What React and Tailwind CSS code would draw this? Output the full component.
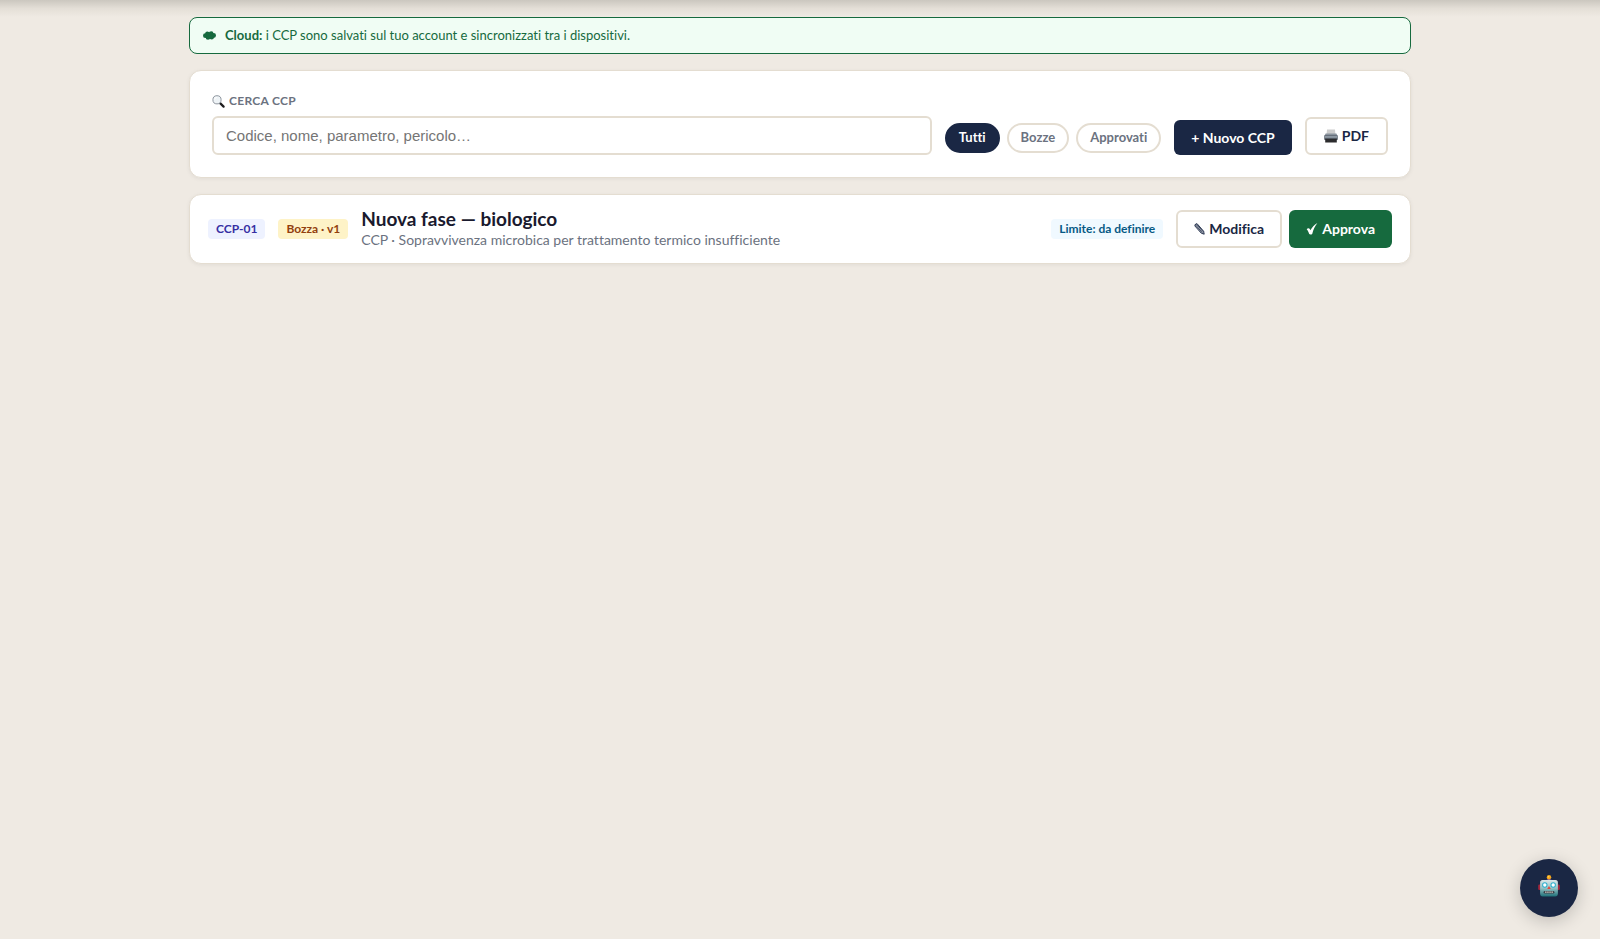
import { useState } from 'react';

const filters = ['Tutti', 'Bozze', 'Approvati'];

const ccpList = [
    {
        code: 'CCP-01',
        status: 'Bozza · v1',
        title: 'Nuova fase — biologico',
        description: 'CCP · Sopravvivenza microbica per trattamento termico insufficiente',
        limit: 'Limite: da definire',
    },
];

function CloudIcon() {
    return (
        <svg className="w-[13px] h-[9px] shrink-0" viewBox="0 0 12 8" fill="currentColor" aria-hidden="true">
            <circle cx="2.2" cy="4.2" r="2.2" />
            <circle cx="4" cy="2.3" r="2" />
            <circle cx="7.6" cy="2.2" r="2.1" />
            <circle cx="9.8" cy="4" r="2.2" />
            <circle cx="8" cy="5.7" r="2.1" />
            <circle cx="4.6" cy="5.8" r="2.1" />
            <rect x="3" y="1" width="6" height="6" />
        </svg>
    );
}

function SearchIcon() {
    return (
        <svg className="w-[13px] h-[13px] shrink-0" viewBox="0 0 13 13" fill="none" aria-hidden="true">
            <path d="M7.6 7.6 11.6 11.6" stroke="#1c1c1e" strokeWidth="2.2" strokeLinecap="round" />
            <circle cx="5" cy="4.8" r="4.1" fill="#eef3f6" stroke="#9097a0" strokeWidth="1" />
            <path d="M2.6 4.6a2.5 2.5 0 0 1 2.2-2.3" stroke="#fff" strokeWidth="1" />
        </svg>
    );
}

function PrinterIcon() {
    return (
        <svg className="w-[14px] h-[14px] shrink-0" viewBox="0 0 14 14" aria-hidden="true">
            <path d="M3 .5h8l.4 4.5H2.600z" fill="#cdcdcd" />
            <path d="M1.600 4.400h10.800l1.200 2.600H.4z" fill="#8a939d" />
            <rect x=".2" y="6.200" width="13.600" height="4.800" rx=".8" fill="#5c6570" />
            <rect x=".8" y="7.200" width="12.400" height="1.500" fill="#9aa5b0" />
            <path d="M1.200 9.800h11.600v3.700H1.200z" fill="#2b2b2d" />
        </svg>
    );
}

function PencilIcon() {
    return (
        <svg className="w-[11px] h-[12px] shrink-0" viewBox="0 0 11 12" fill="none" stroke="currentColor" aria-hidden="true">
            <path d="M1 1.6 3 .6l6.6 7.6.6 3-2.9-1L.9 3z" fill="currentColor" fillOpacity=".35" strokeWidth=".9" />
            <path d="M1.8 2.2 8.2 9.6M2.8 1.4 9 8.6" strokeWidth=".7" />
        </svg>
    );
}

function CheckIcon() {
    return (
        <svg className="w-[12px] h-[12px] shrink-0" viewBox="0 0 11 12" fill="currentColor" aria-hidden="true">
            <path d="M.2 6.200c1-1.200 2.600-1.200 3.200 0l.5 1.100C5.500 4.400 7.600 1.600 10.900 0c-2.600 3.200-4 6.600-5.200 10.900-.9.700-2.300.7-3 .2C2.200 9.200 1.400 7.500.2 6.200z" />
        </svg>
    );
}

function RobotIcon() {
    return (
        <svg className="w-[22px] h-[22px]" viewBox="0 0 22 22" aria-hidden="true">
            <defs>
                <linearGradient id="robotFace" x1="0" y1="0" x2="0" y2="1">
                    <stop offset="0" stopColor="#dbe6e8" />
                    <stop offset=".5" stopColor="#93c0c3" />
                    <stop offset="1" stopColor="#1d6f78" />
                </linearGradient>
            </defs>
            <rect x=".2" y="9.5" width="3" height="5.500" rx="1.2" fill="#a3263c" />
            <rect x="18.800" y="9.5" width="3" height="5.500" rx="1.2" fill="#a3263c" />
            <path d="M8.300 5.400c.3-2 5.100-2 5.400 0z" fill="#7b4fa3" />
            <circle cx="11" cy="2.300" r="2.200" fill="#f6a81c" />
            <circle cx="10.500" cy="1.700" r=".8" fill="#ffd75e" />
            <path d="M4.500 5h13c1.700 0 2.400 1.200 2.400 2.600v11c0 1.900-1 3-2.700 3H4.800c-1.700 0-2.700-1.100-2.700-3v-11C2.100 6.200 2.800 5 4.500 5z" fill="url(#robotFace)" />
            <circle cx="6.800" cy="10" r="2.700" fill="#2bb0cf" />
            <circle cx="15.200" cy="10" r="2.700" fill="#2bb0cf" />
            <circle cx="6.800" cy="10" r="1.700" fill="#fff" />
            <circle cx="15.200" cy="10" r="1.700" fill="#fff" />
            <path d="m11 11 1.800 3H9.200z" fill="#e2483d" />
            <rect x="5.600" y="16" width="10.800" height="2.400" rx="1.200" fill="#3a3f48" />
            <path d="M7.200 17.200h1.300M9.300 17.200h1.300M11.400 17.200h1.300M13.500 17.200h1.300" stroke="#f3ece0" strokeWidth="1.200" />
        </svg>
    );
}

function CcpRow({ ccp }) {
    return (
        <article className="flex flex-wrap items-center gap-[13px] bg-white border border-[#e4ddd1] rounded-xl px-[18px] py-[13px] shadow-[0_1px_4px_rgba(0,0,0,0.06)]">
            <span className="bg-[#eef2ff] text-[#3730a3] text-xs leading-5 font-bold rounded px-2">{ccp.code}</span>
            <span className="bg-[#fef3c7] text-[#92400e] text-xs leading-5 font-bold rounded px-2">{ccp.status}</span>
            <div className="flex-1 min-w-0">
                <h2 className="text-[19px] leading-[22px] font-bold text-[#1a1a2e]">{ccp.title}</h2>
                <p className="text-sm leading-5 text-[#6b7280]">{ccp.description}</p>
            </div>
            <span className="bg-[#f0f9ff] text-[#075985] text-xs leading-5 font-bold rounded px-2">{ccp.limit}</span>
            <div className="flex gap-[7px]">
                <button type="button" className="flex items-center gap-1 h-[38px] px-4 border-2 border-[#e4ddd1] rounded-md bg-white text-[#1a2744] text-sm font-bold">
                    <PencilIcon />
                    Modifica
                </button>
                <button type="button" className="flex items-center gap-1 h-[38px] px-[17px] rounded-md bg-[#166a3e] text-white text-sm font-bold">
                    <CheckIcon />
                    Approva
                </button>
            </div>
        </article>
    );
}

export default function App() {
    const [active, setActive] = useState('Tutti');
    const [query, setQuery] = useState('');

    return (
        <div className="min-h-screen bg-[#efeae3] font-['Lato','Noto_Sans',sans-serif] [font-variant-ligatures:none]">
            <div className="h-[17px] bg-linear-to-b from-[#cbc7bf] via-[#e4dfd7] to-[#efeae3]" />

            <main className="max-w-[1222px] mx-auto flex flex-col gap-4">
                <div className="flex items-center gap-[9px] bg-[#f0fdf4] border border-[#166a3e] rounded-lg px-[13px] h-[37px] text-[#166a3e] text-[13px]">
                    <CloudIcon />
                    <p>
                        <strong className="font-bold">Cloud:</strong> i CCP sono salvati sul tuo account e sincronizzati tra i dispositivi.
                    </p>
                </div>

                <section className="flex flex-wrap items-end gap-[13px] bg-white border border-[#e4ddd1] rounded-xl p-[22px] shadow-[0_1px_4px_rgba(0,0,0,0.06)]">
                    <div className="flex-1 min-w-[220px]">
                        <label htmlFor="search" className="flex items-center gap-1 mb-[7px] text-xs leading-4 font-bold tracking-wide text-[#6b7280]">
                            <SearchIcon />
                            CERCA CCP
                        </label>
                        <input
                            id="search"
                            type="text"
                            value={query}
                            onChange={(e) => setQuery(e.target.value)}
                            placeholder="Codice, nome, parametro, pericolo…"
                            className="block w-full h-[39px] px-3 border-2 border-[#e4ddd1] rounded-md bg-white font-['Liberation_Sans',sans-serif] text-[15px] placeholder:text-[#757575] outline-none"
                        />
                    </div>
                    <div className="flex gap-[7px] pb-[2px]">
                        {filters.map((f) => (
                            <button
                                key={f}
                                type="button"
                                onClick={() => setActive(f)}
                                className={'h-[30px] px-3 border-2 rounded-full text-[13px] font-bold ' + (f === active ? 'bg-[#1a2744] border-[#1a2744] text-white' : 'bg-white border-[#e4ddd1] text-[#6b7280]')}
                            >
                                {f}
                            </button>
                        ))}
                    </div>
                    <button type="button" className="h-[35px] px-[17px] rounded-md bg-[#1a2744] text-white text-sm font-bold">
                        + Nuovo CCP
                    </button>
                    <button type="button" className="flex items-center gap-1 h-[38px] px-[17px] border-2 border-[#e4ddd1] rounded-md bg-white text-[#1a2744] text-sm font-bold">
                        <PrinterIcon />
                        PDF
                    </button>
                </section>

                {ccpList.map((ccp) => (
                    <CcpRow key={ccp.code} ccp={ccp} />
                ))}
            </main>

            <button
                type="button"
                aria-label="Assistente"
                className="fixed right-[22px] bottom-[22px] w-[58px] h-[58px] pb-1 rounded-full bg-[#1a2744] flex items-center justify-center shadow-[0_4px_18px_rgba(0,0,0,0.2)]"
            >
                <RobotIcon />
            </button>
        </div>
    );
}
